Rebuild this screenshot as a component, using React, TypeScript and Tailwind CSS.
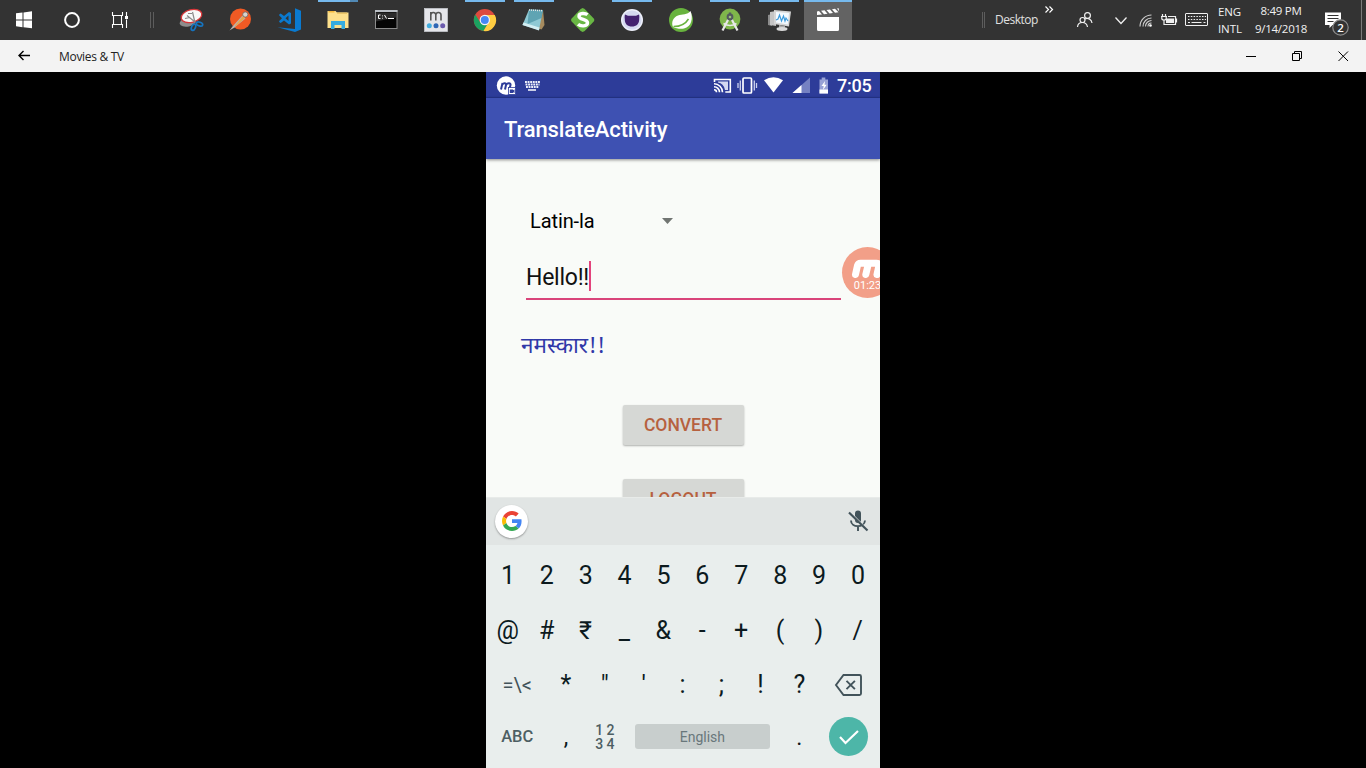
import React from "react";

type CellProps = { children: React.ReactNode; open?: boolean; active?: boolean; grouped?: boolean };

function TaskCell({ children, open, active, grouped }: CellProps) {
  return (
    <div className="h-10 w-[49px] shrink-0">
      <div className={active ? "h-10 w-12 bg-[#636363]" : "h-10 w-12"}>
        <svg className="block" width="48" height="40" viewBox="0 0 48 40">
          {open && <rect x={active ? 0 : 4} y="0" width={active ? 48 : 40} height="2" fill="#76b9ed" />}
          {grouped && <rect x="36" y="0" width="8" height="2" fill="#5189b5" />}
          {children}
        </svg>
      </div>
    </div>
  );
}

function TaskIcons() {
  return (
    <div className="flex">
      <TaskCell>
        <ellipse cx="21" cy="22" rx="8.500" ry="4.500" fill="#8d8d8d" transform="rotate(-12 21 22)" />
        <ellipse cx="24.500" cy="16" rx="10.500" ry="6.300" fill="#f8f8f8" stroke="#d8373a" strokeWidth="1.300" transform="rotate(-14 24.5 16)" />
        <path d="M25.500 12l2.300 10M20 15.500l8 6.500M21 13.500h4M18 18.500l5-1" stroke="#8a8a8a" strokeWidth="1.200" fill="none" />
        <ellipse cx="26.500" cy="27.300" rx="1.900" ry="3.300" fill="none" stroke="#1674bf" strokeWidth="1.700" transform="rotate(25 26.500 27.300)" />
        <ellipse cx="32.500" cy="24" rx="3.300" ry="1.900" fill="none" stroke="#1674bf" strokeWidth="1.700" transform="rotate(20 32.500 24)" />
      </TaskCell>
      <TaskCell>
        <circle cx="24.500" cy="19" r="10.500" fill="#f15a24" />
        <path d="M13.500 30.500l3-4 10-11 3 3-11 9z" fill="#b9b4ae" />
        <path d="M19 25.500l8-9.500 2 2-9 8z" fill="#e8a44c" />
        <circle cx="29.300" cy="14.500" r="2.600" fill="#d8d3cc" stroke="#6f6a66" strokeWidth=".8" />
      </TaskCell>
      <TaskCell>
        <path d="M30 8.300l6 2.500v18.800l-6 2.400-17.500-4.700L30 29z" fill="#0a7ad0" />
        <path d="M14.200 14.500l1.500-1 3.300 2.500 5-4 2 1v10.500l-2 1-5-4-3.300 2.500-1.500-1v-1l2.800-2.700-2.800-2.700z" fill="#0a7ad0" />
        <path d="M20.500 18.200l3-2.700v5.400z" fill="#333" />
      </TaskCell>
      <TaskCell open grouped>
        <path d="M13.500 11h8l1.500 1.500h11.500V28H13.500z" fill="#fde08c" />
        <path d="M14.500 11h6v1.500h-6z" fill="#f5b93c" />
        <path d="M23 12.500h10v1.500H23z" fill="#e9c468" />
        <path d="M17 29v-8h14v8h-3.500v-4h-7v4z" fill="#35ace0" />
      </TaskCell>
      <TaskCell>
        <rect x="12.500" y="10.500" width="21.500" height="18" fill="#050505" stroke="#8b8b8b" />
        <rect x="12" y="10" width="22.500" height="2" fill="#b9bec4" />
        <path d="M13 12.500h20v5l-20 4z" fill="#2b2b2b" />
        <path d="M17.500 15h-2v3.500h2M19.500 15.500v.8M19.500 17.800v.8M21.500 15l2 3.500M25 18.500h6" stroke="#fff" fill="none" />
      </TaskCell>
      <TaskCell>
        <rect x="12.500" y="8.500" width="23" height="23" fill="#e5e6ea" stroke="#c5c7cc" strokeWidth=".8" />
        <path d="M18.800 20.500v-8.500M18.800 15c0-3 5-3.500 5 0v5.500M23.800 15c0-3 5.200-3.500 5.200 0v5.500" stroke="#555" strokeWidth="1.600" fill="none" />
        <circle cx="17.300" cy="25.700" r="2.500" fill="#42addf" /><circle cx="24" cy="25.700" r="2.500" fill="#2e66b5" /><circle cx="30.700" cy="25.700" r="2.500" fill="#6a5aad" />
      </TaskCell>
      <TaskCell open>
        <circle cx="23.800" cy="20" r="11" fill="#dd4b3e" />
        <path d="M14.300 14.500A11 11 0 0 0 22.500 31l5-8.500-3.700-2.500-4.800 2z" fill="#1ba260" />
        <path d="M33.800 15A11 11 0 0 1 22.500 31l5-8.500L24 15z" fill="#ffcd41" />
        <circle cx="23.800" cy="20" r="5.200" fill="#f4f4f4" /><circle cx="23.800" cy="20" r="4" fill="#4688f4" />
      </TaskCell>
      <TaskCell open>
        <path d="M33 10l1.500 15-3 4.500-3-1z" fill="#a68b5e" />
        <path d="M19 9.500l14 .5-4 20-16.500-5z" fill="#8fc9d4" />
        <path d="M19 9.500l14 .5-1.500 8-14 6z" fill="#4f97a8" opacity=".75" />
        <path d="M12.500 25l1-2.500 16 5-.5 3z" fill="#d4eef2" />
        <path d="M19 10l14 .7" stroke="#e5e5e5" strokeWidth="1.500" strokeDasharray="1 1" />
      </TaskCell>
      <TaskCell>
        <path d="M23.700 8l2 1 9.500 10v2l-9.500 10-2 1-2-1-9.500-10v-2l9.500-10z" fill="#69b744" />
        <path d="M28.500 14.800c-2-1.800-8.500-2-8.500 1.400 0 4 8.500 2.500 8.500 6.600 0 3.800-7 3.800-9.500 1.500" stroke="#fff" strokeWidth="3.400" fill="none" />
      </TaskCell>
      <TaskCell open>
        <circle cx="24" cy="20" r="11" fill="#eef0fb" /><circle cx="24" cy="20" r="9.600" fill="#d5d9f0" />
        <path d="M17 14.500l3 1.300h8l3-1.300c.5 2 .3 3.200.2 4.500.2 5-3 7.500-7.200 7.500S16.500 24 16.800 19c-.2-1.300-.3-2.500.2-4.500z" fill="#43216f" />
      </TaskCell>
      <TaskCell>
        <circle cx="24" cy="20" r="12" fill="#68b33e" />
        <path d="M33.500 11c3 7 1 16-6.500 17.500-4 .8-8-.2-11-1.500-2-5 0-9.500 5-11.500 4-1.500 9.500-.5 12.500-4.500z" fill="#fff" />
        <path d="M16.500 26.500c7 0 12-2.500 15-7.500" stroke="#68b33e" strokeWidth="1.500" fill="none" />
      </TaskCell>
      <TaskCell open>
        <circle cx="24" cy="19" r="10.400" fill="#7fb64b" />
        <path d="M22.500 19L16.500 30.500M25.500 19l6 11.500" stroke="#e8e8e8" strokeWidth="2.200" />
        <path d="M17.500 23.500q6.500 4 13 0" stroke="#e8e8e8" strokeWidth="1.700" fill="none" />
        <circle cx="24" cy="17" r="3.400" fill="#535a5e" /><rect x="22.800" y="12.500" width="2.400" height="3" fill="#535a5e" /><circle cx="24" cy="17" r="1.300" fill="#9cc27a" />
      </TaskCell>
      <TaskCell open>
        <path d="M13 15l4-1v12l-4-1z" fill="#8d8d8d" /><path d="M15 12l6-1v15l-6-1z" fill="#c5c5c5" />
        <path d="M19 10l17 1.500-2 15L19 24z" fill="#d6d6d6" /><path d="M21 12l13 1-1.300 11.500L21 22.500z" fill="#f4faff" />
        <path d="M21 20l2-1 1.500-4 2 6 2-5 1.500 5 1-3 2 3" stroke="#3d9bdc" strokeWidth="1.200" fill="none" />
        <path d="M24 25l6 1v2h-6z" fill="#aaa" /><ellipse cx="27" cy="29" rx="5.500" ry="1.900" fill="#dadada" />
      </TaskCell>
      <TaskCell open active>
        <path d="M13 17h22v12.500a1.500 1.500 0 0 1-1.500 1.500h-19a1.500 1.500 0 0 1-1.500-1.500z" fill="#fff" />
        <path d="M13 11.500l2-.5 3 3.500-5 .6zM17 10.800l3.500-.5 3 3.500-3.500.4zM22.500 10l3.500-.4 3 3.500-3.500.4zM28 9.200l3-.4 3.500 3.500-3.500.5zM33 8.600l1.700-.3.300 3z" fill="#fff" />
      </TaskCell>
    </div>
  );
}

function Tray() {
  return (
    <div className="flex h-10 w-[385px] items-center font-['Open_Sans',sans-serif] text-[#f0f0f0]">
      <div className="ml-px h-4 w-[3px] border-x border-[#5d5d5d]" />
      <span className="ml-[10px] w-[46px] text-[12px] tracking-[-0.5px] whitespace-nowrap text-[#e0e0e0]">Desktop</span>
      <svg className="ml-[3px] shrink-0" width="12" height="40" viewBox="0 0 12 40" fill="none" stroke="#fff" strokeWidth="1.200"><path d="M1.500 6.500L4.500 9.500l-3 3M5.500 6.500l3 3-3 3" /></svg>
      <svg className="ml-[20px] shrink-0" width="18" height="40" viewBox="0 0 18 40" fill="none" stroke="#f0f0f0" strokeWidth="1.200"><circle cx="11.500" cy="15.500" r="2.900" /><circle cx="6.500" cy="20" r="2.500" /><path d="M1.500 27c.5-6 9-6 10 0M8.500 19c4-1.500 7 .5 7.500 4" /></svg>
      <svg className="ml-[20px] shrink-0" width="14" height="40" viewBox="0 0 14 40" fill="none" stroke="#f0f0f0" strokeWidth="1.300"><path d="M1.500 17.500l5.500 6 5.500-6" /></svg>
      <svg className="ml-[11px] shrink-0" width="16" height="40" viewBox="0 0 16 40" fill="none" stroke="#d0d0d0" strokeWidth="1.100"><path d="M1 26.500A11.500 11.500 0 0 1 12.500 15M4 26.500a8.500 8.500 0 0 1 8.500-8.500M6.500 26.500a6 6 0 0 1 6-6M9 26.500a3.500 3.500 0 0 1 3.500-3.500" /><circle cx="11.500" cy="25.500" r="1.300" fill="#fff" stroke="none" /></svg>
      <svg className="ml-[5px] shrink-0" width="18" height="40" viewBox="0 0 18 40" fill="none" stroke="#f0f0f0" strokeWidth="1.200"><path d="M2.500 14v2M5.500 14v2M1 16.500h6M1.800 17v2q2.200 2.200 4.400 0v-2M4 20v4.500h11.500v-8H8M16.500 18.500v4" /><path d="M6 18.500h8v4.500H6z" fill="#f0f0f0" stroke="none" /></svg>
      <svg className="ml-[7px] shrink-0" width="24" height="40" viewBox="0 0 24 40" fill="none" stroke="#f0f0f0"><rect x=".5" y="13.500" width="22" height="12" rx=".5" /><path d="M3 16.500h18M3 19.500h18" strokeDasharray="1.500 1.300" /><path d="M3 22.500h2M6.500 22.500h10M18.500 22.500h2" /></svg>
      <div className="ml-[9px] w-[27px] shrink-0 text-[11.500px] leading-[17px] tracking-[-0.1px] whitespace-nowrap">
        <div>ENG</div><div>INTL</div>
      </div>
      <div className="ml-[8px] w-[56px] shrink-0 text-center text-[11.500px] leading-[17px] tracking-[-0.25px] whitespace-nowrap">
        <div className="-mt-[2px]">8:49 PM</div><div className="mt-px">9/14/2018</div>
      </div>
      <svg className="ml-[15px] shrink-0" width="26" height="40" viewBox="0 0 26 40"><path d="M1 12.500h16v12.500H8.500l-3 3v-3H1z" fill="#fff" /><path d="M3.500 15.500h11M3.500 18.500h11M3.500 21.500h6" stroke="#333" /><circle cx="16.500" cy="27.500" r="7.700" fill="#333" stroke="#8d8d8d" strokeWidth="1.200" /><text x="16.500" y="31.500" textAnchor="middle" fontSize="11.500" fontWeight="600" fontFamily="Open Sans" fill="#fff">2</text></svg>
      <div className="ml-[11px] h-10 w-px shrink-0 bg-[#7a7a7a]" />
    </div>
  );
}

function Taskbar() {
  return (
    <div className="flex h-10 shrink-0 bg-[#333333]">
      <svg className="block shrink-0" width="167" height="40" viewBox="0 0 167 40" fill="none" stroke="#fff">
        <path stroke="none" fill="#fff" d="M16 13.300l6.500-.8v7H16zM23.500 12.400l8.500-1.100v8.200h-8.500zM16 20.500h6.500v6.700l-6.500-.9zM23.500 20.500H32V28.300l-8.500-1.100z" />
        <circle cx="72" cy="20" r="6.900" strokeWidth="2" />
        <path d="M112.500 12v3.500h10V12M112.500 28v-3.500h10V28M113.500 15.500v9M121.500 15.500v9M126.500 12v4M126.500 19.500V28" strokeWidth="1.100" />
        <path d="M125 16h3v3h-3z" fill="#fff" stroke="none" />
        <path d="M150.500 12v16M153.500 12v16" stroke="#5d5d5d" />
      </svg>
      <TaskIcons />
      <div className="grow" />
      <Tray />
    </div>
  );
}

function TitleBar() {
  return (
    <div className="flex h-8 shrink-0 items-center bg-[#f3f3f3]">
      <svg className="ml-[17px] shrink-0" width="14" height="32" viewBox="0 0 14 32" fill="none" stroke="#000" strokeWidth="1.400"><path d="M13 15.500H2M6.500 11L2 15.500 6.500 20" /></svg>
      <span className="ml-7 grow pt-px font-['Open_Sans',sans-serif] text-[12px] tracking-[-0.3px] text-[#222]">Movies &amp; TV</span>
      <svg className="shrink-0" width="120" height="32" viewBox="0 0 120 32" fill="none" stroke="#000"><path d="M0 16.500h10M46.500 13.500h7v7h-7zM48.500 13.500v-2h7v7h-2M92.500 11.500l9.500 9.500M102 11.500L92.500 21" /></svg>
    </div>
  );
}

function StatusBar() {
  return (
    <div className="flex h-[26px] shrink-0 items-center bg-[#2d3c99] text-white shadow-[inset_0_-1px_1px_#25338a]">
      <svg className="ml-[10px] shrink-0" width="48" height="26" viewBox="0 0 48 26"><circle cx="10" cy="13.500" r="9.200" fill="#fff" /><path d="M5 17.500l1.500-6.500M6 13c1.500-2.500 4.500-2 4 0L9 17.500M10 13c1.500-2.500 5-2 4.500 0l-1 4" stroke="#2d3c99" strokeWidth="2" fill="none" /><rect x="12.500" y="15.500" width="7" height="7" fill="#fff" stroke="#2d3c99" strokeWidth=".8" /><path d="M13.800 17.500h3.200v.8l1.500-.8v3.500l-1.500-.8v.8h-3.200z" fill="#2d3c99" /><path d="M29 10h15M29.500 12.500h14M30 15h13" stroke="#eef0fb" strokeWidth="1.800" strokeDasharray="1.900 .7" /><path d="M32 18h8" stroke="#fff" strokeWidth="1.500" /></svg>
      <div className="grow" />
      <svg className="shrink-0" width="118" height="26" viewBox="0 0 118 26" fill="none" stroke="#fff">
        <path d="M1.500 10V7.500h15.800v12.500h-5M1 17.800a2.500 2.500 0 0 1 2.500 2.500M1 14.800a5.500 5.500 0 0 1 5.500 5.500M1 11.800a8.500 8.500 0 0 1 8.500 8.500" strokeWidth="1.600" /><path d="M5 9.500h10v8.500h-3Q10.500 11 5 10.500z" fill="#d4d9f1" stroke="none" />
        <rect x="30" y="6" width="8.500" height="15" rx="1" strokeWidth="1.700" /><path d="M27.300 8.500v10M25 11v5M41.300 8.500v10M43.500 11v5" stroke="#ccd2ee" strokeWidth="1.300" />
        <path d="M51 8.200q9.500-6 19 0L60.500 20.500z" fill="#fff" stroke="none" />
        <path d="M97 5.500v15.500h-17.500z" fill="#7581c2" stroke="none" /><path d="M88.500 13v8h-9z" fill="#fff" stroke="none" />
        <path d="M106.500 7.500h2.200V5.500h3.600v2h2.700v14h-8.500z" fill="#98a2d6" stroke="none" /><path d="M106.500 17.500h8.500v4h-8.500z" fill="#fff" stroke="none" /><path d="M112 9l-3.500 5h2.200l-.7 4 3.700-5.200h-2.200z" fill="#fff" stroke="none" />
      </svg>
      <span className="ml-[6px] w-[43px] pt-[2px] font-[Roboto,sans-serif] text-[18px] leading-[26px] font-medium tracking-[-0.2px] whitespace-nowrap">7:05</span>
    </div>
  );
}

const digits = ["1", "2", "3", "4", "5", "6", "7", "8", "9", "0"];
const symbols = ["@", "#", "₹", "_", "&", "-", "+", "(", ")", "/"];
const marks = ["*", "\"", "'", ":", ";", "!", "?"];

function Key({ label }: { label: string }) {
  return <div className="w-[38.900px] shrink-0 text-center">{label}</div>;
}

function Keyboard() {
  return (
    <div className="flex h-[271px] shrink-0 flex-col bg-[#e9eeed] font-[Roboto,sans-serif] text-[25px] text-[#0c1a1e]">
      <div className="flex h-12 shrink-0 items-center justify-between border-t border-[#e8ebe9] bg-[#e1e5e4] pr-[11px] pb-px pl-[9px]">
        <div className="flex size-[33px] items-center justify-center rounded-full bg-white shadow-[0_1px_2px_rgba(0,0,0,0.35)]">
          <svg width="20" height="20" viewBox="0 0 48 48"><path fill="#EA4335" d="M24 9.500c3.540 0 6.710 1.220 9.210 3.600l6.850-6.850C35.900 2.380 30.470 0 24 0 14.620 0 6.510 5.380 2.560 13.220l7.980 6.190C12.430 13.720 17.740 9.500 24 9.500z" /><path fill="#4285F4" d="M46.980 24.550c0-1.570-.15-3.090-.38-4.550H24v9.020h12.940c-.58 2.960-2.260 5.480-4.780 7.180l7.730 6c4.510-4.180 7.090-10.360 7.090-17.650z" /><path fill="#FBBC05" d="M10.530 28.590c-.48-1.450-.76-2.990-.76-4.590s.27-3.140.76-4.590l-7.980-6.190C.92 16.460 0 20.120 0 24s.92 7.540 2.560 10.780l7.970-6.190z" /><path fill="#34A853" d="M24 48c6.480 0 11.930-2.130 15.890-5.810l-7.730-6c-2.150 1.450-4.920 2.300-8.160 2.300-6.260 0-11.570-4.220-13.470-9.910l-7.980 6.190C6.510 42.620 14.620 48 24 48z" /></svg>
        </div>
        <svg width="22" height="24" viewBox="0 0 22 24" fill="none" stroke="#42535a"><path d="M8 4.500a3 3 0 0 1 6 0V11a3 3 0 0 1-6 0z" fill="#42535a" stroke="none" /><path d="M4 11.500c0 7.500 13.500 7.500 14 0M11 17v5" strokeWidth="1.900" /><path d="M3.200 3.500l17.500 18" stroke="#e1e5e4" strokeWidth="2" /><path d="M2 3.500l18.500 18" strokeWidth="2.200" /></svg>
      </div>
      <div className="flex h-[58px] items-center pt-[4px] pl-[2.500px]">{digits.map((k) => <Key key={k} label={k} />)}</div>
      <div className="flex h-[54px] items-center pt-[2px] pl-[2.300px]">{symbols.map((k) => <Key key={k} label={k} />)}</div>
      <div className="flex h-[54px] items-center pt-[2px] pl-[2px]">
        <div className="w-[58.500px] shrink-0 text-center text-[20px] text-[#42535a]">=\&lt;</div>
        {marks.map((k) => <Key key={k} label={k} />)}
        <svg className="ml-[15px] shrink-0" width="30" height="24" viewBox="0 0 30 24" fill="none" stroke="#42535a" strokeWidth="1.900"><path d="M9.500 2h16a1.500 1.500 0 0 1 1.500 1.500v17a1.500 1.500 0 0 1-1.500 1.500h-16L2 12zM12.500 7.800l8.400 8.400M20.900 7.800l-8.400 8.400" /></svg>
      </div>
      <div className="flex h-[51px] items-center pl-[2px]">
        <div className="w-[58.500px] shrink-0 pt-[2px] text-center text-[16.500px] font-medium text-[#4d5e63]">ABC</div>
        <div className="w-[38.900px] shrink-0 pt-[3px] text-center text-[23px]">,</div>
        <div className="flex w-[39px] shrink-0 flex-col items-center pt-px text-[14px] leading-[14px] font-medium text-[#4d5e63]"><span>1 2</span><span>3 4</span></div>
        <div className="ml-[10.500px] flex h-[25px] w-[135px] shrink-0 items-center justify-center rounded-[3px] bg-[#c8cecd] pt-px text-[14px] text-[#68777b]">English</div>
        <div className="ml-[10px] w-[39px] shrink-0 pt-[3px] text-center text-[23px]">.</div>
        <div className="ml-[10.500px] flex size-[39px] shrink-0 items-center justify-center rounded-full bg-[#4db6a8]">
          <svg width="22" height="18" viewBox="0 0 22 18" fill="none" stroke="#fff" strokeWidth="2.200"><path d="M2 9l5.500 6L20 3" /></svg>
        </div>
      </div>
    </div>
  );
}

function Phone() {
  return (
    <div className="relative flex h-[696px] w-[394px] flex-col overflow-hidden bg-[#f9fbf8] font-[Roboto,sans-serif]">
      <StatusBar />
      <div className="z-10 flex h-[61px] shrink-0 items-center bg-[#3e51b2] pt-[2px] pl-[18px] text-[22px] font-medium tracking-[-0.130px] whitespace-nowrap text-white shadow-[0_1px_3px_rgba(0,0,0,0.45)]">TranslateActivity</div>
      <div className="flex h-[338px] shrink-0 flex-col overflow-hidden">
        <div className="mt-[47px] ml-[44px] flex h-[30px] shrink-0 items-center text-[20px] text-black">
          <span className="w-[132px] tracking-[-0.100px]">Latin-la</span>
          <svg width="11" height="6" viewBox="0 0 11 6"><path d="M0 0h11L5.500 6z" fill="#717572" /></svg>
        </div>
        <div className="mt-[25px] ml-[40px] flex h-[39px] w-[315px] shrink-0 border-b-2 border-[#d9447a] text-[23px] text-[#111]">
          <span className="w-[63px] leading-[33px] tracking-[-0.250px] whitespace-nowrap">Hello!!</span>
          <span className="h-[30px] w-[2px] bg-[#e3437c]" />
        </div>
        <div className="mt-[28px] ml-[35px] h-[40px] shrink-0 font-['Noto_Sans_Devanagari','Noto_Sans',sans-serif] text-[22.500px] leading-[40px] text-[#3038a8]">नमस्कार!!</div>
        <div className="mt-[37px] flex h-10 w-[121px] shrink-0 items-center justify-center self-center rounded-[2px] bg-[#d6d8d5] text-[17.500px] font-medium text-[#b6613f] shadow-[0_1px_2px_rgba(0,0,0,0.3)]">CONVERT</div>
        <div className="mt-[34px] flex h-10 w-[121px] shrink-0 items-center justify-center self-center rounded-[2px] bg-[#d6d8d5] text-[17.500px] font-medium text-[#b6613f] shadow-[0_1px_2px_rgba(0,0,0,0.3)]">LOGOUT</div>
      </div>
      <Keyboard />
      <div className="absolute top-[175px] left-[356px] flex size-[51px] flex-col items-center rounded-full bg-[#f29f88] text-white">
        <svg className="mt-[11px]" width="34" height="22" viewBox="0 0 34 22" fill="none" stroke="#fff" strokeWidth="7" strokeLinecap="round" strokeLinejoin="round"><path d="M4.500 16.500L6.500 7.500q.7-2.300 3-2.300h16q3 0 2.300 3L26 16.500M17.300 6l-2.500 10.500" /></svg>
        <span className="text-[11px] leading-[11px]">01:23</span>
      </div>
    </div>
  );
}

export default function App() {
  return (
    <div className="flex h-[768px] w-[1366px] flex-col overflow-hidden bg-black">
      <Taskbar />
      <TitleBar />
      <div className="flex h-[696px] pl-[486px]"><Phone /></div>
    </div>
  );
}
